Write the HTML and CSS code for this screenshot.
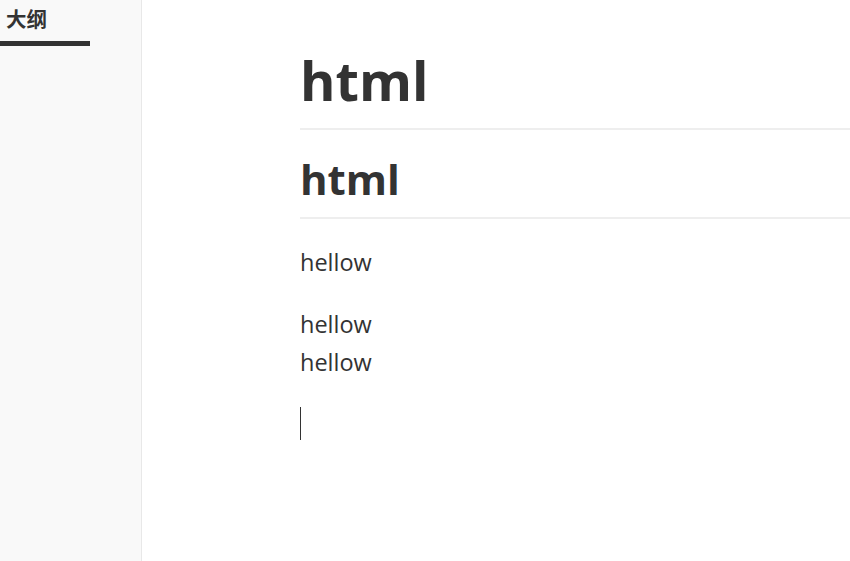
FILE: index.html
```html
<!DOCTYPE html>
<html>
<head>
<meta charset="utf-8">
<link rel="stylesheet" href="styles.css">
</head>
<body>
<div class="app">
  <aside class="sidebar">
    <div class="tab">大纲</div>
  </aside>
  <main class="write">
    <h1 class="h1">html</h1>
    <h2 class="h2">html</h2>
    <p class="para">hellow</p>
    <p class="para">hellow<br>hellow</p>
    <div class="cursor-line"><span class="cursor"></span></div>
  </main>
</div>
</body>
</html>
```
FILE: styles.css
```css
html, body {
  margin: 0;
  padding: 0;
  height: 100%;
  overflow: hidden;
  background: #fff;
}
.app {
  display: flex;
  height: 561px;
  font-family: "Open Sans", "Noto Sans CJK SC", sans-serif;
  color: #333;
}
.sidebar {
  width: 141px;
  flex: none;
  background: #f9f9f9;
  border-right: 1px solid #e8e8e8;
}
.tab {
  width: 84px;
  padding: 5px 0 10px 6px;
  font-family: "Noto Sans CJK SC", sans-serif;
  font-weight: bold;
  font-size: 20.5px;
  line-height: 26px;
  color: #333;
  border-bottom: 5px solid #333;
}
.write {
  flex: 1;
  padding: 42px 0 0 158px;
  font-size: 23.5px;
}
.h1 {
  margin: 0;
  font-size: 54px;
  font-weight: 700;
  line-height: 76px;
  padding-bottom: 10px;
  border-bottom: 2px solid #eee;
}
.h2 {
  margin: 19px 0 0;
  font-size: 42px;
  font-weight: 700;
  line-height: 59px;
  padding-bottom: 9px;
  border-bottom: 2px solid #eee;
}
.para {
  margin: 24px 0 0;
  line-height: 38px;
}
.cursor-line {
  margin-top: 24px;
  padding-top: 2px;
  height: 38px;
}
.cursor {
  display: block;
  width: 1px;
  height: 33px;
  background: #333;
}
```
